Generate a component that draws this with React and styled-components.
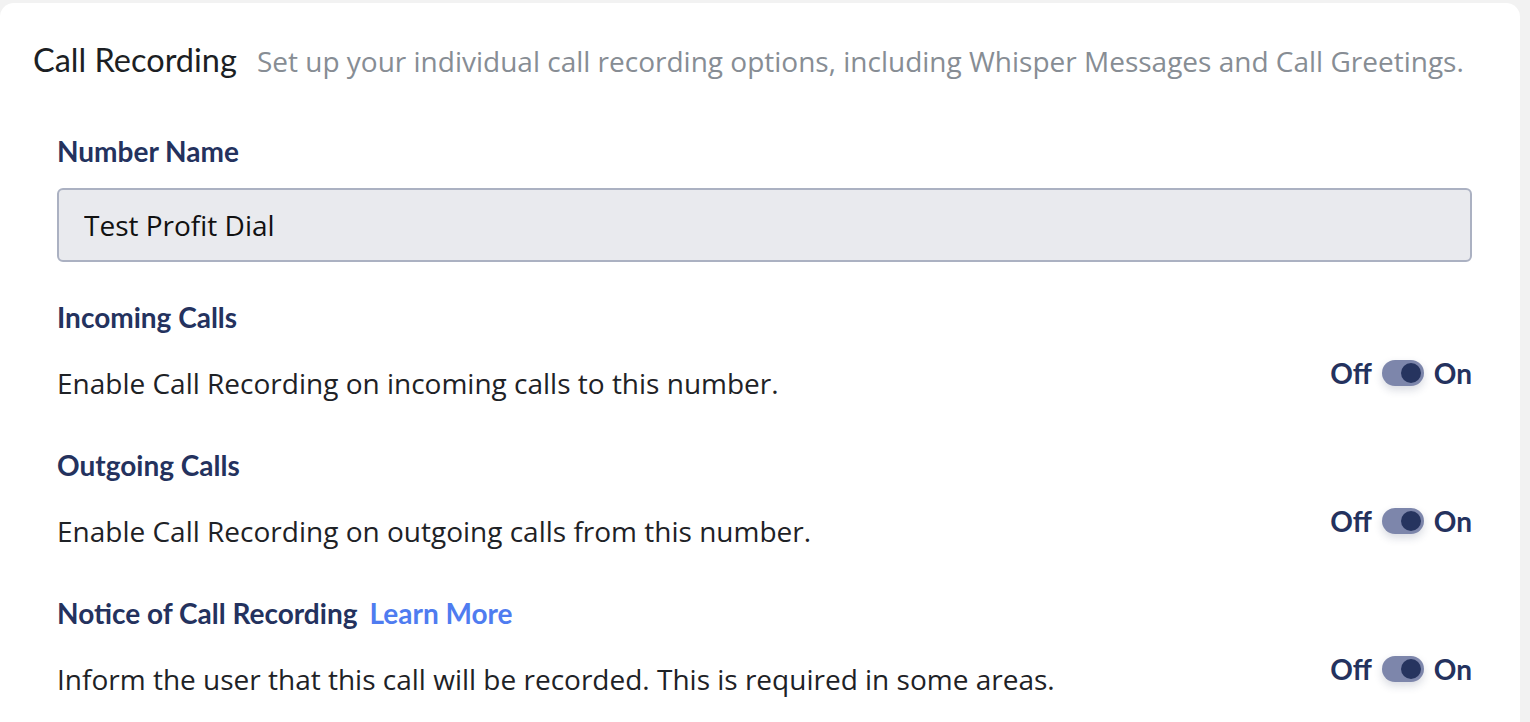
import React from "react";
import styled, { createGlobalStyle } from "styled-components";

const Global = createGlobalStyle`
  html, body { margin: 0; padding: 0; background: #f2f2f2; }
  body { font-family: "Open Sans", sans-serif; }
`;

const Page = styled.div`
  padding-top: 3px;
  padding-right: 10px;
  width: 1530px;
  box-sizing: border-box;
  height: 722px;
  overflow: hidden;
`;

const Card = styled.div`
  background: #ffffff;
  border-radius: 14px;
  padding: 35px 48px 40px 33px;
  min-height: 760px;
  box-sizing: border-box;
`;

const Header = styled.div`
  display: flex;
  align-items: baseline;
  gap: 20px;
  height: 44px;
`;

const Title = styled.h1`
  margin: 0;
  font-family: Lato, sans-serif;
  font-weight: 400;
  font-size: 32.5px;
  color: #1c1f24;
  line-height: 44px;
  white-space: nowrap;
`;

const Subtitle = styled.span`
  font-family: "Open Sans", sans-serif;
  font-size: 28px;
  color: #878d94;
  white-space: nowrap;
`;

const Body = styled.div`
  padding-left: 24px;
  margin-top: 51px;
  display: flex;
  flex-direction: column;
`;

const Label = styled.div`
  font-family: Lato, sans-serif;
  font-weight: 700;
  font-size: 28px;
  line-height: 36px;
  color: #24325e;
  display: flex;
  gap: 12px;
`;

const Link = styled.a`
  color: #4f7cf0;
  text-decoration: none;
  cursor: pointer;
`;

const Input = styled.input`
  margin-top: 19px;
  margin-bottom: 37px;
  height: 74px;
  box-sizing: border-box;
  border: 2px solid #abb1c2;
  border-radius: 6px;
  background: #e9eaee;
  padding: 0 25px;
  font-family: "Open Sans", sans-serif;
  font-size: 28px;
  color: #111;
  outline: none;
`;

const Row = styled.div`
  display: flex;
  align-items: flex-start;
  justify-content: space-between;
  margin-top: 20px;
  margin-bottom: 46px;
`;

const Desc = styled.div`
  font-family: "Open Sans", sans-serif;
  font-size: 28px;
  color: #1e2226;
  line-height: 36px;
  padding-top: 10px;
`;

const ToggleGroup = styled.div`
  display: flex;
  align-items: center;
  gap: 10px;
  height: 36px;
  font-family: Lato, sans-serif;
  font-weight: 700;
  font-size: 28px;
  color: #24325e;
`;

const Track = styled.div`
  width: 42px;
  height: 26px;
  border-radius: 13px;
  background: #7d86ab;
  position: relative;
  box-shadow: 0 4px 8px rgba(40, 50, 90, 0.18);
`;

const Knob = styled.div`
  position: absolute;
  top: 3px;
  left: ${(p) => (p.$on ? "19px" : "3px")};
  width: 20px;
  height: 20px;
  border-radius: 50%;
  background: #26345f;
`;

const Toggle = ({ on = true }) => (
  <ToggleGroup>
    <span>Off</span>
    <Track>
      <Knob $on={on} />
    </Track>
    <span>On</span>
  </ToggleGroup>
);

const sections = [
  { label: "Incoming Calls", desc: "Enable Call Recording on incoming calls to this number." },
  { label: "Outgoing Calls", desc: "Enable Call Recording on outgoing calls from this number." },
  {
    label: "Notice of Call Recording",
    link: "Learn More",
    desc: "Inform the user that this call will be recorded. This is required in some areas.",
  },
];

export default function App() {
  return (
    <>
      <Global />
      <Page>
        <Card>
          <Header>
            <Title>Call Recording</Title>
            <Subtitle>
              Set up your individual call recording options, including Whisper Messages and Call Greetings.
            </Subtitle>
          </Header>
          <Body>
            <Label>Number Name</Label>
            <Input defaultValue="Test Profit Dial" />
            {sections.map((s) => (
              <React.Fragment key={s.label}>
                <Label>
                  {s.label}
                  {s.link && <Link>{s.link}</Link>}
                </Label>
                <Row>
                  <Desc>{s.desc}</Desc>
                  <Toggle on />
                </Row>
              </React.Fragment>
            ))}
          </Body>
        </Card>
      </Page>
    </>
  );
}
